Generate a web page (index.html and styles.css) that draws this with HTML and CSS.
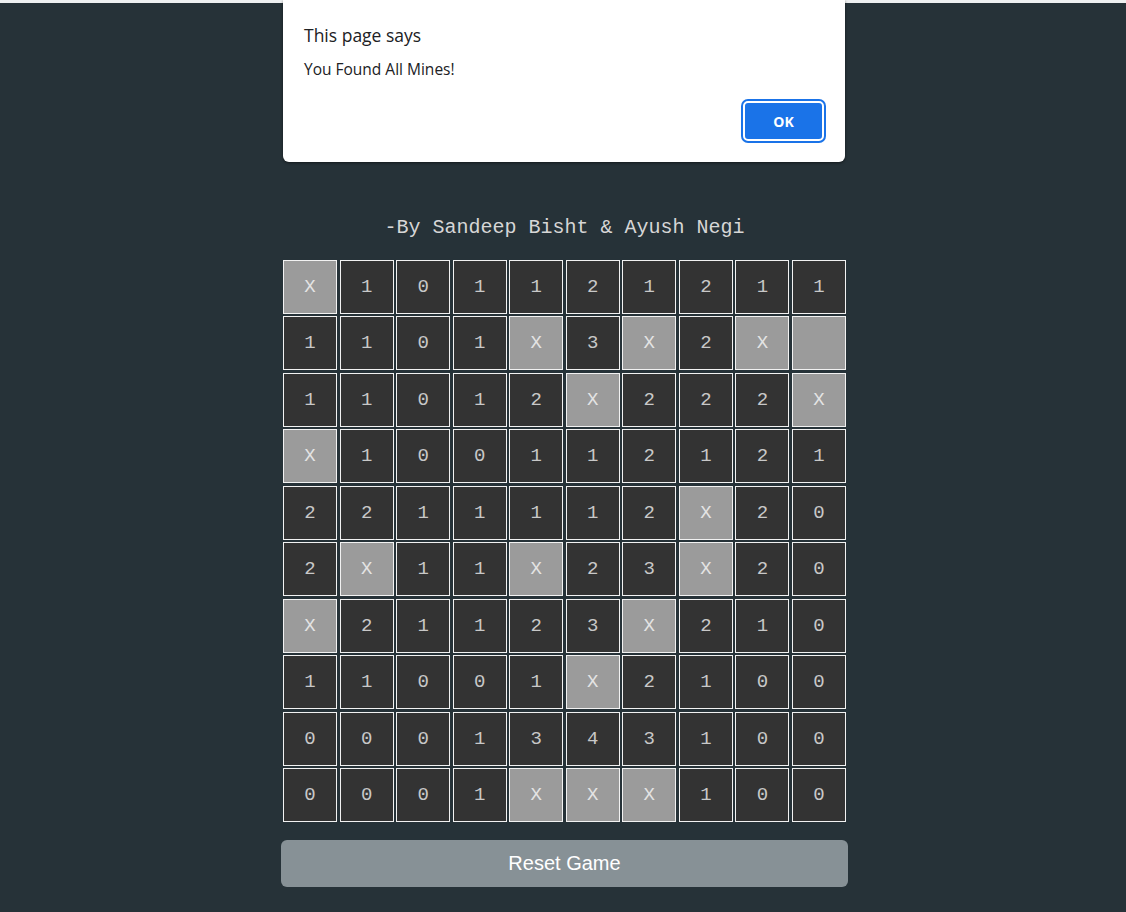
FILE: index.html
```html
<!DOCTYPE html>
<html>
<head>
<meta charset="utf-8">
<link rel="stylesheet" href="styles.css">
</head>
<body>
<div class="topbar"></div>
<main class="page">
  <h2 class="credit">-By Sandeep Bisht &amp; Ayush Negi</h2>
  <div class="board" id="board"></div>
  <button class="reset">Reset Game</button>
</main>
<div class="dialog">
  <div class="dialog-title">This page says</div>
  <div class="dialog-msg">You Found All Mines!</div>
  <div class="dialog-actions"><button class="ok">OK</button></div>
</div>
<script>
var rows = [
"X101121211",
"1101X3X2X ",
"11012X222X",
"X100112121",
"2211112X20",
"2X11X23X20",
"X21123X210",
"11001X2100",
"0001343100",
"0001XXX100"
];
var b=document.getElementById('board');
rows.forEach(function(r){
  for(var i=0;i<10;i++){
    var c=r[i]; var d=document.createElement('div');
    d.className='cell'+((c==='X'||c===' ')?' mine':'');
    d.textContent=c===' '?'':c;
    b.appendChild(d);
  }
});
</script>
</body>
</html>
```
FILE: styles.css
```css
html, body { margin: 0; padding: 0; }
body {
  background: #263238;
  width: 1126px;
  height: 912px;
  overflow: hidden;
  position: relative;
}
.topbar { height: 3px; background: #eef0f1; }
.page {
  width: 567px;
  margin-left: 281px;
  display: flex;
  flex-direction: column;
  align-items: center;
}
.credit {
  margin: 213px 0 0 0;
  height: 44px;
  font-family: "Liberation Mono", monospace;
  font-weight: normal;
  font-size: 20px;
  line-height: 24px;
  color: #d6d6d6;
}
.board {
  width: 563px;
  display: grid;
  grid-template-columns: repeat(10, 1fr);
  gap: 2.45px;
}
.cell {
  height: 54px;
  box-sizing: border-box;
  border: 1px solid #f2f2f2;
  background: #333333;
  color: #c8c8c8;
  font-family: "Liberation Mono", monospace;
  font-size: 19px;
  display: flex;
  align-items: center;
  justify-content: center;
}
.cell.mine { background: #9b9b9b; color: #e4e4e4; }
.reset {
  margin-top: 18px;
  width: 567px;
  height: 47px;
  border: none;
  border-radius: 6px;
  background: #879196;
  color: #ffffff;
  font-family: "Liberation Sans", Arial, sans-serif;
  font-size: 20px;
}
.dialog {
  position: absolute;
  top: 0;
  left: 283px;
  width: 562px;
  height: 162px;
  box-sizing: border-box;
  background: #ffffff;
  border-radius: 0 0 6px 6px;
  box-shadow: 0 1px 3px rgba(0,0,0,0.5);
  padding: 23px 21px 0 21px;
  font-family: "Open Sans", "Noto Sans", sans-serif;
  color: #202124;
}
.dialog-title { font-size: 17.5px; line-height: 24px; }
.dialog-msg { font-size: 15.5px; line-height: 22px; margin-top: 11px; }
.dialog-actions { display: flex; justify-content: flex-end; margin-top: 21px; }
.ok {
  width: 81px;
  height: 40px;
  box-sizing: border-box;
  background: #1a73e8;
  border: 2px solid #ffffff;
  box-shadow: 0 0 0 2px #1a73e8;
  border-radius: 5px;
  color: #fff;
  font-family: "Open Sans", "Noto Sans", sans-serif;
  font-weight: bold;
  font-size: 14px;
  margin-right: 0;
}
```
